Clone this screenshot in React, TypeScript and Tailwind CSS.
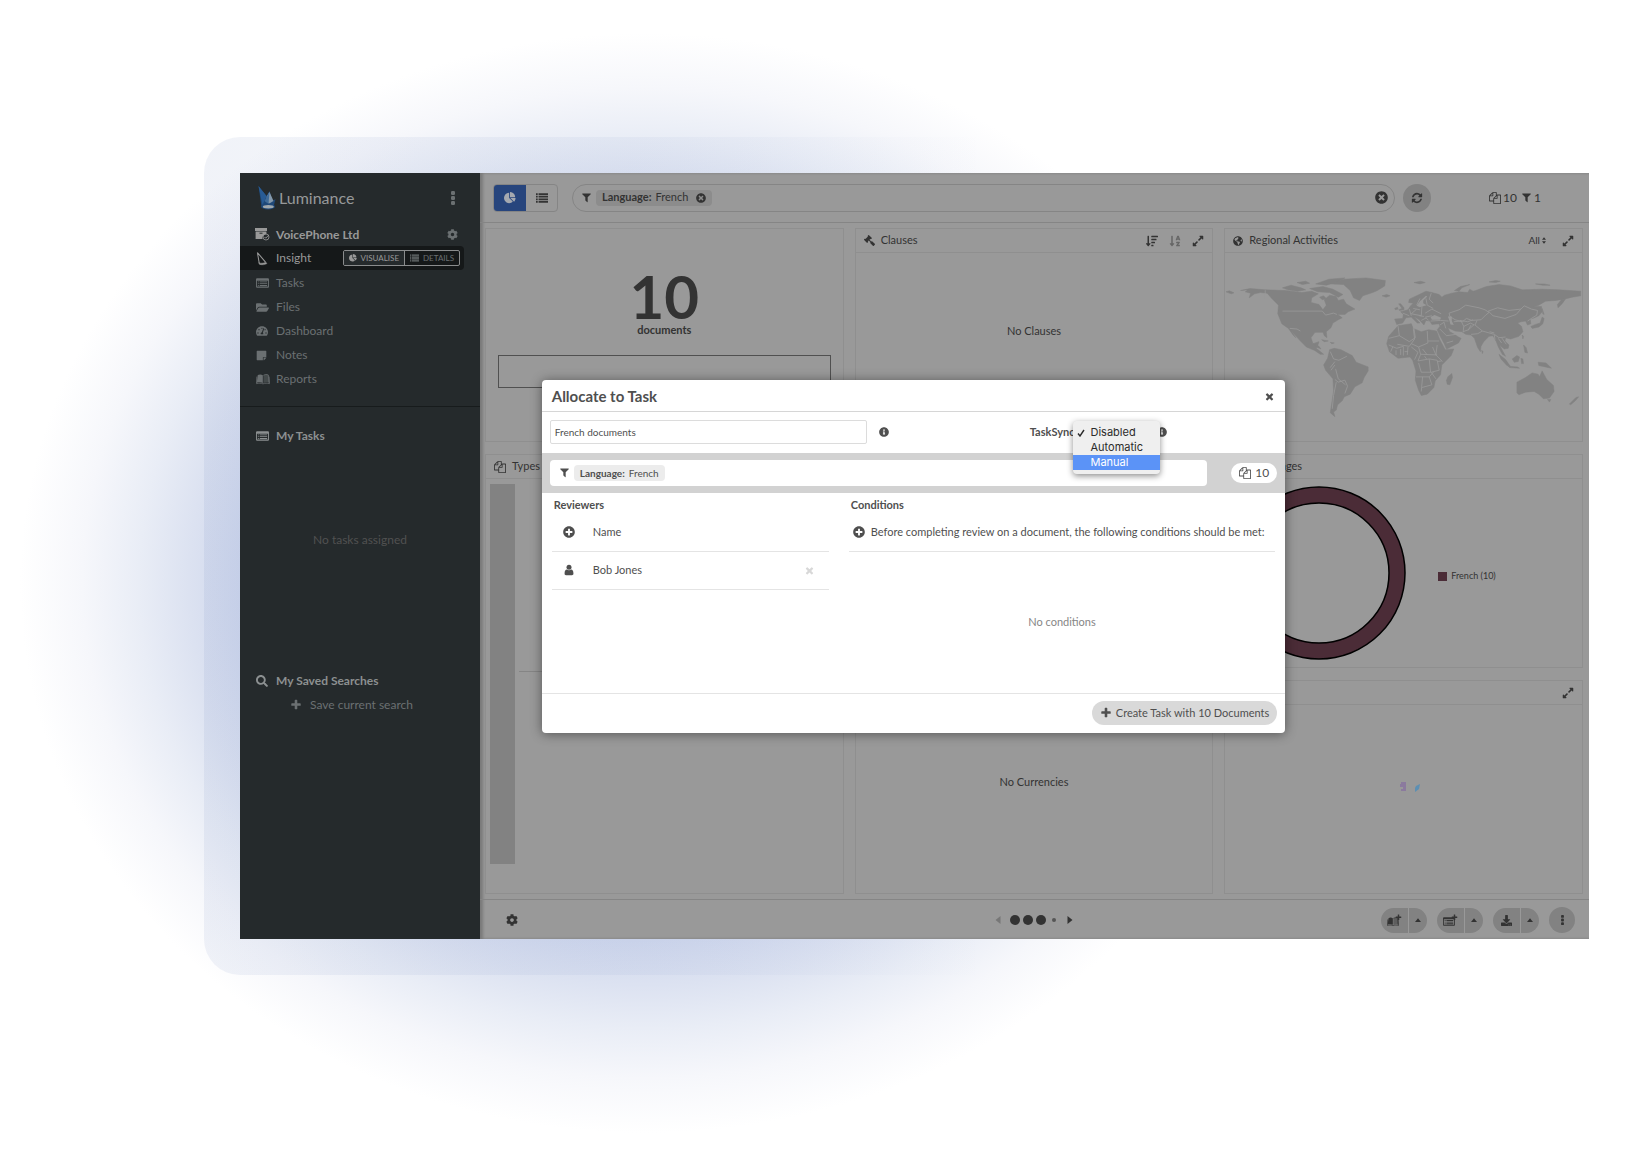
import React from "react";
import {
  FaCog,
  FaDownload,
  FaExpandAlt,
  FaFolderOpen,
  FaGavel,
  FaGlobeAmericas,
  FaInfoCircle,
  FaPlusCircle,
  FaSearch,
  FaSortAlphaDown,
  FaSortAmountDown,
  FaStickyNote,
  FaTachometerAlt,
  FaTimesCircle,
} from "react-icons/fa";

type IconProps = { className?: string };

const glyphs = {
  pie: "M768 890l546 546q-106 108-247.500 168t-298.500 60q-209 0-385.500-103t-279.500-279.500-103-385.500 103-385.500 279.500-279.500 385.500-103v762zm187 6h773q0 157-60 298.500t-168 247.500zm709-128h-768v-768q209 0 385.500 103t279.500 279.500 103 385.500z",
  times:
    "M1490 1322q0 40-28 68l-136 136q-28 28-68 28t-68-28l-294-294-294 294q-28 28-68 28t-68-28l-136-136q-28-28-28-68t28-68l294-294-294-294q-28-28-28-68t28-68l136-136q28-28 68-28t68 28l294 294 294-294q28-28 68-28t68 28l136 136q28 28 28 68t-28 68l-294 294 294 294q28 28 28 68z",
  plus: "M1600 736v192q0 40-28 68t-68 28h-416v416q0 40-28 68t-68 28h-192q-40 0-68-28t-28-68v-416h-416q-40 0-68-28t-28-68v-192q0-40 28-68t68-28h416v-416q0-40 28-68t68-28h192q40 0 68 28t28 68v416h416q40 0 68 28t28 68z",
  filter:
    "M1595 295q17 41-14 70l-493 493v742q0 42-39 59-13 5-25 5-27 0-45-19l-256-256q-19-19-19-45v-486l-493-493q-31-29-14-70 17-39 59-39h1280q42 0 59 39z",
  files:
    "M1696 384q40 0 68 28t28 68v1216q0 40-28 68t-68 28h-960q-40 0-68-28t-28-68v-288h-544q-40 0-68-28t-28-68v-672q0-40 20-88t48-76l408-408q28-28 76-48t88-20h416q40 0 68 28t28 68v328q68-40 128-40h416zm-544 213l-299 299h299v-299zm-640-384l-299 299h299v-299zm196 647l316-316v-416h-384v416q0 40-28 68t-68 28h-416v640h512v-256q0-40 20-88t48-76zm956 804v-1152h-384v416q0 40-28 68t-68 28h-416v640h896z",
  refresh:
    "M1639 1056q0 5-1 7-64 268-268 434.500t-478 166.500q-146 0-282.500-55t-243.500-157l-129 129q-19 19-45 19t-45-19-19-45v-448q0-26 19-45t45-19h448q26 0 45 19t19 45-19 45l-137 137q71 66 161 102t187 36q134 0 250-65t186-179q11-17 53-117 8-23 30-23h192q13 0 22.500 9.500t9.500 22.500zm25-800v448q0 26-19 45t-45 19h-448q-26 0-45-19t-19-45 19-45l138-138q-148-137-349-137-134 0-250 65t-186 179q-11 17-53 117-8 23-30 23h-199q-13 0-22.500-9.500t-9.500-22.500v-7q65-268 270-434.500t480-166.500q146 0 284 55.500t245 156.500l130-129q19-19 45-19t45 19 19 45z",
};

function Glyph({ name, className }: { name: keyof typeof glyphs; className?: string }) {
  return (
    <svg viewBox="0 0 1792 1792" fill="currentColor" className={className} aria-hidden="true">
      <path d={glyphs[name]} />
    </svg>
  );
}

function ListIcon({ className }: IconProps) {
  return (
    <svg viewBox="0 0 14 12" fill="currentColor" className={className} aria-hidden="true">
      <path d="M0 .5h2v2H0zM3 .5h11v2H3zM0 3.500h2v2H0zM3 3.500h11v2H3zM0 6.500h2v2H0zM3 6.500h11v2H3zM0 9.500h2v2H0zM3 9.500h11v2H3z" />
    </svg>
  );
}

function ListAlt({ className }: IconProps) {
  return (
    <svg viewBox="0 0 14 12" fill="currentColor" className={className} aria-hidden="true">
      <path
        fillRule="evenodd"
        d="M1.500 1h11A1.300 1.300 0 0 1 14 2.300v7.400A1.300 1.300 0 0 1 12.500 11h-11A1.300 1.300 0 0 1 0 9.700V2.300A1.300 1.300 0 0 1 1.500 1zM1 3.500v6.300h12V3.500zM2 4.300h1v1H2zm2 0h8v1H4zM2 6.200h1v1H2zm2 0h8v1H4zM2 8.100h1v1H2zm2 0h8v1H4z"
      />
    </svg>
  );
}

function Book({ className }: IconProps) {
  return (
    <svg viewBox="0 0 15 12" fill="currentColor" className={className} aria-hidden="true">
      <path d="M1.900 1.800C3.700.8 5.700.9 7.300 2v8.200c-1.800-.9-3.800-1-6.500-.3z" />
      <path fillOpacity=".45" d="M8 2c1.600-1 3.500-1.100 5.200-.3l.8 8.200c-2-.7-4.300-.6-6 .4z" />
      <path
        fill="none"
        stroke="currentColor"
        strokeWidth=".8"
        d="M8 2c1.600-1 3.500-1.100 5.200-.3l.6 8.200M.9 3.400L.5 11c2.500-.7 5-.6 7 .2 2-.8 4.500-.9 7-.2L14.100 3.400"
      />
    </svg>
  );
}

function Dots({ className }: IconProps) {
  return (
    <svg viewBox="0 0 4 14" fill="currentColor" className={className} aria-hidden="true">
      <rect width="4" height="4" rx="1.200" />
      <rect y="5" width="4" height="4" rx="1.200" />
      <rect y="10" width="4" height="4" rx="1.200" />
    </svg>
  );
}

function Person({ className }: IconProps) {
  return (
    <svg viewBox="0 0 10 12" fill="currentColor" className={className} aria-hidden="true">
      <circle cx="5" cy="3.300" r="2.500" />
      <path d="M.6 9C.6 6.700 1.600 5.500 2.800 5.500c1.200.9 3.200.9 4.400 0C8.400 5.500 9.400 6.700 9.400 9v1c0 .7-.7 1.200-1.400 1.200H2C1.200 11.200.6 10.700.6 10z" />
    </svg>
  );
}

function Archive({ className }: IconProps) {
  return (
    <svg viewBox="0 0 15 13" className={className} aria-hidden="true">
      <path fill="currentColor" d="M0 0h12v3H0zM.6 3.500h10.800V6A4 4 0 0 0 7.500 11H.6z" />
      <path stroke="#252a2c" d="M4.500 5.200h3" />
      <circle cx="11" cy="9" r="3" fill="none" stroke="currentColor" strokeWidth=".8" />
      <path fill="none" stroke="currentColor" strokeWidth=".9" d="M9.500 9l1.200 1.200L13.800 7" />
    </svg>
  );
}

function Sail({ className }: IconProps) {
  return (
    <svg viewBox="0 0 13 15" fill="none" stroke="currentColor" className={className} aria-hidden="true">
      <path d="M1.500 1L3.500 12.500M1.500 1l8.800 10.500" strokeWidth="1.100" />
      <path fill="currentColor" d="M3 12c2 1 5 .8 7.800-.5l1 1.500c-2 1.400-6 1.700-8.300.6z" strokeWidth=".5" />
    </svg>
  );
}

function Logo({ className }: IconProps) {
  return (
    <svg viewBox="0 0 19 24" className={className} aria-hidden="true">
      <path fill="#1f4878" d="M1 0l8 10 3-5 3 10 3-2-2 8H4z" />
      <path fill="#285b94" d="M1 0l8 10-4 9z" />
      <path fill="#8398ab" d="M12 6l4 9-5 3-2-7z" />
      <path fill="#3f6b98" d="M12 6l-5 9 4 3z" />
      <ellipse cx="10.500" cy="20.500" rx="7" ry="3" fill="#1f4878" />
      <ellipse cx="10.800" cy="20.800" rx="5.500" ry="1.700" fill="#a0a8ad" />
    </svg>
  );
}

function Caret({ className }: IconProps) {
  return (
    <svg viewBox="0 0 8 5" fill="currentColor" className={className} aria-hidden="true">
      <path d="M4 0l4 5H0z" />
    </svg>
  );
}

const land = [
  // North America
  "M92 376l28-6 46 4 60 2 50 6 30-4 20 8-20 12 -2 14 24 6 12 16 10-14-6-16 16-14 20 4 6 12 16-4 8 14 26 16-20 8-10 8-22 0 14 10-12 6-16 10-6 14-14 12 2 18-8-6-4-10-24 0-12 16 6 18 18-6-4 12-4 8 10 8 12 10-10 0-18-12-24-10-20-20-16-18-10-12 14 22-8-8-14-20-20-14-12-30 2-26-20-20-14-16-20-2-18 4-16 12 4-14-16-4 8-6z",
  "M48 380l10-3 14 6-8 3z",
  // Arctic islands
  "M218 368l26-8 30 8 14 6-24 4-30-4zM262 352l26-4 12 6-22 4zM318 356l40-14 48-4-22 12-34 10zM300 370l40-6 30 8 30 16-14 8-26-14-36-2zM330 396l12-4 8 8-12 4z",
  // Greenland
  "M366 356l36-14 68-4 58 8-2 16-22 14-14 6-30 10-10 14-18-8-10-22-20-18z",
  "M518 392l14-4 10 4-12 4z",
  // South America
  "M360 554l14-4 20 4 34 18 12 20 36 14 0 12-12 20-6 16-22 12-14 22-18 8-6 12-14 12-4 16-8 6 4 14-14-12 4-26 6-40-2-36-22-26-6-16 12-20z",
  "M310 536l18 8 6 8-14-6zM336 524l20 4-12 2zM362 532l12 2-8 2z",
  // Africa
  "M566 482l40-6 6 14 24 10 22-6 24 4 10 26 16 30 26-2-8 20-28 28-4 30-16 18-4 20-20 20-18 4-8-16-10-30 2-28-10-32-8-10-36 4-26-20-8-24 6-22 14-16z",
  "M716 636l12-10 2 12-8 22-8-2-2-12z",
  // Europe and Asia
  "M556 462L580 460 582 448 574 440 596 434 604 422 612 414 598 412 600 402 630 388 650 378 668 382 690 388 698 396 706 390 728 384 750 380 776 382 782 372 792 378 800 376 832 364 870 358 905 362 940 374 1000 372 1050 374 1116 378 1116 392 1090 396 1066 402 1040 406 1010 408 990 420 975 424 998 424 1000 440 990 452 972 460 964 462 966 476 956 480 950 468 936 470 926 474 938 484 942 500 930 514 905 522 890 518 888 528 900 540 898 550 886 552 876 544 870 536 880 556 890 574 880 568 868 546 862 530 852 512 840 514 824 530 816 544 814 560 806 548 796 520 786 510 770 508 758 500 738 498 716 488 722 500 736 508 748 516 756 520 748 534 712 552 704 534 690 508 684 494 692 484 690 476 668 478 662 468 650 466 644 480 630 464 614 454 632 474 624 474 606 456 590 458 580 474 562 478z",
  "M568 434l10-4-10-14 6 0 10 12 0 6-14 2zM556 430l8-4 2 6-8 2zM614 352l20-4 14 4-16 4zM736 376l18-12 28-6-24 10-8 10zM840 350l20-4 14 2-14 4zM980 356l26 0 18 4-22 0z",
  "M1046 418l12-14 12-2-10 14-12 12z",
  // Japan and south-east Asia
  "M966 484l14-6 14-4 6-18 6 4-4 16-12 10-20 4zM1000 430l6 18-4-2zM940 510l4 4-2 8zM944 540l8 8 4 16-8-2zM870 568l20 16 14 20-10-2-18-20zM898 604l28 2 6 4-30-2zM910 582l14-10 8 4-4 14-12 2zM936 580l6 2 2 14-6 0zM988 592l24 2 16 16-18-4-20-4zM818 556l4 4-2 6z",
  // Oceania
  "M924 652l26-14 20-14 18 4 4 8 8-18 14 26 20 18 2 18-14 20-18 2-14-14-14-8-26 2-20 8-6-6zM1016 704l10 0-4 8zM1082 718l20-20 8-2-10 12-14 12z",
];

// Inland seas cut out of the land
const seas = [
  "M650 392l-18 16-10 14 10 4 20-6-10-6 0-8 12-12z",
  "M664 456l12-6 20 8-4 6-24 0z",
  "M716 454l12 0 0 14 6 12-10-2-4-14z",
];

const borders =
  "M166 375v26M218 438h120l10 12 24-6 10 4M240 490l22 2 10 6M376 600l-12 16M362 560l10 22 16 4 24-12M376 590l-14 18M378 612l8 30 22 18M376 644l10 8 20-6 8 18-8 22M380 652l-8 40-4 40M566 482l4 30-32 8M570 512l30 18 18-12-6-42M612 490l4 32-16 22-36-6M654 498l2 36-28 12-22-10M656 528h34M538 540l24 10 20-6v28M596 546l-2 24M606 546l20 16-10 22M628 546l6 22 50 2M684 540l-4 30 20 20M634 568l-8 20 34-6 24 4 6 30-24 6-30 0-8-28M620 636h40l14-16M640 636l-4 44M660 636l8 24-30 8M666 622l14 20M560 556v14M574 552v18M660 582l4 40M640 552l14 18M670 546l10 24M646 574l6 8M684 590l14-2M550 546l-6 14M586 560l10 0M580 444l20 8M600 432l6 20M650 400l4 20 18 10M622 432l-16 14 30 6M648 444l20-12 28 14M636 466l16-8M666 384l-6 18 12 12M632 400l-10 20M638 424l-2 28M612 430l20 4M630 452l14 2M668 452l-20 4M650 458l8 8M720 444l30-10 20-14 40 8 18 6 12 8-10 8-14 14-28 2-16-6-12 10-22-6-16-10zM838 438l28-10 34 8 36-4-14 16-34 12-36-8zM936 432l10-10 22 10 18 4-2 14-16 10-12 8M804 466l-6 14 22 18 36 10 14 10 20-2M820 498l-14 8-20 2M776 496l20-18M704 470l6 20M734 470l22-2 8 16-2 18M764 484l20-10 12 6M762 500l16-6 8-14M856 510l2 14M868 520l10 14M878 518l14 20M664 468l30-2 24 2M692 480l12-8M692 492l20 20 28-4M712 534l20-6M752 466l24 4 16-6M842 500l14 4";

function WorldMap() {
  return (
    <svg viewBox="45 263 1074 565" className="block w-full" role="img" aria-label="World map">
      <g fill="#828282" stroke="#828282" strokeWidth="1.500" strokeLinejoin="round">
        {land.map((d) => (
          <path key={d} d={d} />
        ))}
      </g>
      <g fill="#999999">
        {seas.map((d) => (
          <path key={d} d={d} />
        ))}
      </g>
      <path d={borders} fill="none" stroke="#999999" strokeWidth="2.500" strokeLinejoin="round" />
    </svg>
  );
}

function Card({
  icon,
  title,
  tools,
  className = "",
  children,
}: {
  icon?: React.ReactNode;
  title?: string;
  tools?: React.ReactNode;
  className?: string;
  children?: React.ReactNode;
}) {
  return (
    <section className={"flex min-h-0 min-w-0 flex-col border border-[#8f8f8f] " + className}>
      <header className="flex h-6 shrink-0 items-center border-b border-[#8f8f8f] px-2">
        {icon}
        {title && <h2 className="ml-1.5 text-[11px]">{title}</h2>}
        <div className="ml-auto flex items-center">{tools}</div>
      </header>
      {children}
    </section>
  );
}

function Expand() {
  return (
    <button aria-label="Expand">
      <FaExpandAlt className="size-3" />
    </button>
  );
}

function NavItem({ icon, label }: { icon: React.ReactNode; label: string }) {
  return (
    <li>
      <a href="#" className="flex h-6 items-center pl-4">
        <span className="flex w-5 items-center">{icon}</span>
        {label}
      </a>
    </li>
  );
}

function Sidebar() {
  return (
    <aside className="flex w-60 shrink-0 flex-col bg-[#252a2c] text-xs leading-6 text-[#6b7072]">
      <div className="flex h-[50px] items-center pr-[25px] pl-[17px]">
        <Logo className="h-6 w-5" />
        <span className="ml-0.5 text-base text-[#97999a]">Luminance</span>
        <button aria-label="Menu" className="ml-auto">
          <Dots className="h-3.5 w-1" />
        </button>
      </div>
      <div className="flex h-[23px] items-center pr-[22px] pl-[15px] font-bold text-[#999999]">
        <Archive className="mr-1.5 h-[13px] w-[15px]" />
        VoicePhone Ltd
        <button aria-label="Settings" className="ml-auto text-[#6b7072]">
          <FaCog className="size-[11px]" />
        </button>
      </div>
      <div className="mr-4 flex h-6 items-center rounded-r bg-[#151819] pr-1 pl-4 text-[#999999]">
        <Sail className="mr-2 h-[15px] w-3" />
        Insight
        <div className="ml-auto flex h-4 overflow-hidden rounded-xs border border-[#8a8c8d] text-[8px] leading-[14px]">
          <button className="flex items-center gap-1 border-r border-[#8a8c8d] bg-[#252a2c] px-[5px]">
            <Glyph name="pie" className="size-2" />
            VISUALISE
          </button>
          <button className="flex items-center gap-1 px-[5px] text-[#6b7072]">
            <ListIcon className="h-2 w-[9px]" />
            DETAILS
          </button>
        </div>
      </div>
      <ul className="mt-px">
        <NavItem icon={<ListAlt className="h-3 w-[13px]" />} label="Tasks" />
        <NavItem icon={<FaFolderOpen className="size-[13px]" />} label="Files" />
        <NavItem icon={<FaTachometerAlt className="size-3" />} label="Dashboard" />
        <NavItem icon={<FaStickyNote className="size-[11px]" />} label="Notes" />
        <NavItem icon={<Book className="h-3 w-3.5" />} label="Reports" />
      </ul>
      <div className="mt-[15px] border-t border-[#171b1c] pt-[17px]">
        <h2 className="flex items-center pl-4 font-bold text-[#8c9091]">
          <ListAlt className="mr-[7px] h-3 w-[13px]" />
          My Tasks
        </h2>
        <p className="py-20 text-center text-[#515151]">No tasks assigned</p>
      </div>
      <div className="mt-[37px]">
        <h2 className="flex items-center pl-4 font-bold text-[#8c9091]">
          <FaSearch className="mr-2 size-3" />
          My Saved Searches
        </h2>
        <button className="flex items-center pl-[50px]">
          <Glyph name="plus" className="mr-2 size-3" />
          Save current search
        </button>
      </div>
    </aside>
  );
}

function Toolbar() {
  return (
    <div className="flex h-[50px] shrink-0 items-center border-b border-[#858585] pr-12 pl-[13px]">
      <div className="flex h-7 w-[65px] overflow-hidden rounded border border-[#858585]">
        <button aria-label="Visualise" className="flex w-8 items-center justify-center bg-[#27457d] text-[#a5a9b0]">
          <Glyph name="pie" className="size-3" />
        </button>
        <button aria-label="Details" className="flex flex-1 items-center justify-center">
          <ListIcon className="h-3 w-3" />
        </button>
      </div>
      <div className="ml-3.5 flex h-7 flex-1 items-center rounded-full border border-[#858585] pr-1.5 pl-2">
        <Glyph name="filter" className="size-[11px]" />
        <span className="ml-1 flex h-4 items-center rounded-sm bg-[#8c8c8c] px-1.5 text-[11px]">
          <b className="mr-1">Language:</b>French
          <button aria-label="Remove filter" className="ml-2">
            <FaTimesCircle className="size-2.5" />
          </button>
        </span>
        <button aria-label="Clear" className="ml-auto">
          <FaTimesCircle className="size-[13px]" />
        </button>
      </div>
      <button aria-label="Refresh" className="ml-2 flex size-7 items-center justify-center rounded-full bg-[#828282]">
        <Glyph name="refresh" className="size-3" />
      </button>
      <div className="ml-[58px] flex items-center text-xs">
        <Glyph name="files" className="mr-0.5 size-3" />
        10
        <Glyph name="filter" className="mx-0.5 ml-1 size-[11px]" />1
      </div>
    </div>
  );
}

function SplitButton({ label, children }: { label: string; children: React.ReactNode }) {
  return (
    <div className="flex h-[25px] gap-px overflow-hidden rounded-full">
      <button aria-label={label} className="flex w-[27px] items-center justify-center bg-[#828282]">
        {children}
      </button>
      <button aria-label={label + " options"} className="flex w-[18px] items-center justify-center bg-[#828282]">
        <Caret className="h-1 w-1.5" />
      </button>
    </div>
  );
}

function BottomBar() {
  return (
    <div className="grid h-10 shrink-0 grid-cols-3 items-center border-t border-[#858585] px-3.5 pt-px">
      <button aria-label="Settings" className="ml-3 justify-self-start">
        <FaCog className="size-3" />
      </button>
      <div className="flex items-center justify-center gap-0.5">
        <Caret className="mr-1.5 h-1.5 w-2 -rotate-90 text-[#777777]" />
        <span className="size-2.5 rounded-full bg-current" />
        <span className="ml-px size-2.5 rounded-full bg-current" />
        <span className="ml-px size-2.5 rounded-full bg-current" />
        <span className="ml-1 size-1 rounded-full bg-[#555555]" />
        <Caret className="ml-2 h-1.5 w-2 rotate-90" />
      </div>
      <div className="flex items-center gap-2.5 justify-self-end">
        <SplitButton label="Add report">
          <span className="flex items-end">
            <Book className="h-[11px] w-3" />
            <Glyph name="plus" className="mb-1.5 -ml-1 size-[7px]" />
          </span>
        </SplitButton>
        <SplitButton label="Add task">
          <span className="flex items-end">
            <ListAlt className="h-[11px] w-3" />
            <Glyph name="plus" className="mb-1.5 -ml-1 size-[7px]" />
          </span>
        </SplitButton>
        <SplitButton label="Download">
          <FaDownload className="size-[11px]" />
        </SplitButton>
        <button aria-label="More" className="flex size-[26px] items-center justify-center rounded-full bg-[#828282]">
          <Dots className="h-2.5 w-[3px]" />
        </button>
      </div>
    </div>
  );
}

function Cards() {
  return (
    <div className="grid min-h-0 flex-1 grid-cols-3 gap-x-[11px] py-[5px] pr-1.5 pl-[5px]">
      <div className="grid min-h-0 grid-rows-3 gap-3">
        <section className="flex flex-col items-center border border-[#8f8f8f] px-3 pt-[41px]">
          <p className="text-[60px] leading-[52px] font-bold">10</p>
          <p className="text-[11px] leading-4 font-bold">documents</p>
          <div className="mt-[17px] h-[33px] w-full border border-[#505050]" />
        </section>
        <Card icon={<Glyph name="files" className="size-3" />} title="Types" className="row-span-2">
          <div className="flex flex-1 items-start pt-[5px] pr-3 pl-1">
            <div className="h-[380px] w-[25px] bg-[#828282]" />
            <div className="mt-[187px] ml-1 flex-1 border-t border-[#858585]" />
          </div>
        </Card>
      </div>
      <div className="grid min-h-0 grid-rows-3 gap-3">
        <Card
          icon={<FaGavel className="size-[11px] -scale-x-100" />}
          title="Clauses"
          tools={
            <>
              <button aria-label="Sort by amount" className="mr-[11px]">
                <FaSortAmountDown className="size-3" />
              </button>
              <button aria-label="Sort by name" className="mr-[11px] text-[#666666]">
                <FaSortAlphaDown className="size-3" />
              </button>
              <Expand />
            </>
          }
        >
          <p className="mt-[70px] text-center text-[11px] leading-4">No Clauses</p>
        </Card>
        <Card />
        <Card>
          <p className="mt-[69px] text-center text-[11px] leading-4">No Currencies</p>
        </Card>
      </div>
      <div className="grid min-h-0 grid-rows-3 gap-3">
        <Card
          icon={<FaGlobeAmericas className="size-2.5" />}
          title="Regional Activities"
          tools={
            <>
              <button className="mr-4 flex items-center gap-0.5 text-[10px]">
                All
                <span className="flex flex-col gap-px">
                  <Caret className="h-[3px] w-1" />
                  <Caret className="h-[3px] w-1 rotate-180" />
                </span>
              </button>
              <Expand />
            </>
          }
        >
          <WorldMap />
        </Card>
        <Card icon={<Glyph name="pie" className="size-3" />} title="Languages">
          <div className="flex flex-1 items-center pl-1.5">
            <svg viewBox="0 0 176 176" className="size-44" role="img" aria-label="French, 10 documents">
              <circle cx="88" cy="88" r="78" fill="none" stroke="#4b2c37" strokeWidth="16" />
              <circle cx="88" cy="88" r="86" fill="none" stroke="#000000" strokeWidth="1.500" />
              <circle cx="88" cy="88" r="70" fill="none" stroke="#000000" strokeWidth="1.500" />
            </svg>
            <span className="mt-1.5 ml-[31px] flex items-center gap-1 text-[9px]">
              <span className="size-[9px] bg-[#4b2c37]" />
              French (10)
            </span>
          </div>
        </Card>
        <Card tools={<Expand />}>
          <div className="flex flex-1 items-start justify-center pt-[76px] pl-3">
            <svg viewBox="0 0 20 11" className="h-[11px] w-5" aria-hidden="true">
              <path fill="#8b7a9e" d="M1 1h5v9H1V8h2V6H0V3h1z" />
              <path fill="#5c8fb3" d="M16 5l4-2-1 5-4 3v-4z" />
            </svg>
          </div>
        </Card>
      </div>
    </div>
  );
}

function TaskDialog() {
  return (
    <div
      role="dialog"
      aria-label="Allocate to Task"
      className="flex min-h-[353px] w-[55.2%] flex-col rounded-sm bg-white text-[11px] leading-4 text-[#4f4f4f] shadow-[0_1px_12px_rgba(0,0,0,0.45)]"
    >
      <header className="flex h-8 items-center border-b border-[#d6d6d6] pt-0.5 pr-2.5 pl-2.5">
        <h1 className="text-[15px] leading-5 font-bold">Allocate to Task</h1>
        <button aria-label="Close" className="ml-auto">
          <Glyph name="times" className="size-[11px]" />
        </button>
      </header>
      <div className="flex h-[41px] items-center px-2">
        <input
          aria-label="Task name"
          defaultValue="French documents"
          className="h-6 w-[317px] rounded-xs border border-[#dcdcdc] px-1 text-[10px]"
        />
        <FaInfoCircle className="ml-3 size-2.5" />
        <span id="sync" className="ml-[141px] font-bold">
          TaskSync
        </span>
        <div className="relative h-6 w-[77px]">
          <ul
            role="listbox"
            aria-labelledby="sync"
            className="absolute top-px -left-px z-10 w-[87px] rounded-sm bg-[#efefef] py-1 font-[Inter,sans-serif] text-[11px] leading-[15px] text-[#2b2b2b] shadow-[0_2px_6px_rgba(0,0,0,0.45)]"
          >
            <li role="option" aria-selected="true" className="relative pl-[17px]">
              <svg viewBox="0 0 8 8" className="absolute top-1 left-1 size-2" aria-hidden="true">
                <path d="M1 4.500L3 7l4-6" fill="none" stroke="currentColor" strokeWidth="1.400" />
              </svg>
              Disabled
            </li>
            <li role="option" aria-selected="false" className="pl-[17px]">
              Automatic
            </li>
            <li role="option" aria-selected="false" className="bg-[#5b93f7] pl-[17px] text-white">
              Manual
            </li>
          </ul>
        </div>
        <FaInfoCircle className="ml-1.5 size-2.5" />
      </div>
      <div className="flex h-10 items-center bg-[#d2d2d2] px-2">
        <div className="flex h-[26px] flex-1 items-center rounded bg-white px-[9px]">
          <Glyph name="filter" className="size-[11px]" />
          <span className="ml-1 flex h-4 items-center rounded-sm bg-[#ececec] px-1.5 text-[10px]">
            <b className="mr-1">Language:</b>French
          </span>
        </div>
        <span className="ml-6 flex h-5 items-center gap-1 rounded-full bg-white px-2 text-xs">
          <Glyph name="files" className="size-3" />
          10
        </span>
      </div>
      <div className="flex flex-1">
        <div className="ml-2.5 w-[277px] shrink-0">
          <h2 className="mt-[3px] ml-0.5 leading-[18px] font-bold">Reviewers</h2>
          <div className="flex h-[38px] items-center border-b border-[#e4e4e4] pl-[11px]">
            <button aria-label="Add reviewer">
              <FaPlusCircle className="size-3" />
            </button>
            <span className="ml-[18px]">Name</span>
          </div>
          <div className="flex h-[38px] items-center border-b border-[#e4e4e4] pr-3.5 pl-[11px]">
            <Person className="size-3" />
            <span className="ml-[18px]">Bob Jones</span>
            <button aria-label="Remove Bob Jones" className="ml-auto text-[#d8d8d8]">
              <Glyph name="times" className="size-[11px]" />
            </button>
          </div>
        </div>
        <div className="mr-2.5 ml-5 flex flex-1 flex-col">
          <h2 className="mt-[3px] ml-0.5 leading-[18px] font-bold">Conditions</h2>
          <div className="flex h-[38px] items-center border-b border-[#e4e4e4] pl-1 whitespace-nowrap">
            <button aria-label="Add condition">
              <FaPlusCircle className="size-3" />
            </button>
            <span className="ml-1.5">
              Before completing review on a document, the following conditions should be met:
            </span>
          </div>
          <p className="mt-[62px] text-center text-[#868686]">No conditions</p>
        </div>
      </div>
      <footer className="flex h-10 items-center justify-end border-t border-[#e4e4e4] px-2">
        <button className="flex h-6 items-center gap-1 rounded-full bg-[#d9d9d9] px-2">
          <Glyph name="plus" className="size-3" />
          Create Task with 10 Documents
        </button>
      </footer>
    </div>
  );
}

export default function App() {
  return (
    <div className="flex min-h-screen flex-col bg-white bg-[radial-gradient(625px_550px_at_645px_583px,#8298d2_0%,#c5cfe9_58%,#d0d8ed_65%,#dce2f1_73%,#e9edf6_81%,#f6f7fb_90%,#ffffff_100%)] pt-[137px] pb-[191px] pl-[204px] font-[Lato,sans-serif] text-[#333333]">
      <div className="flex flex-1 rounded-l-[36px] bg-[linear-gradient(90deg,rgba(70,100,170,0.08),rgba(70,100,170,0.05)_30%,rgba(255,255,255,0)_55%)] py-9 pr-11 pl-9">
        <div className="relative flex min-w-0 flex-1 bg-[#999999]">
          <Sidebar />
          <main className="flex min-w-0 flex-1 flex-col shadow-[inset_3px_0_3px_rgba(0,0,0,0.2)]">
            <Toolbar />
            <Cards />
            <BottomBar />
          </main>
          <div className="absolute inset-0 flex items-center justify-center pr-0.5">
            <TaskDialog />
          </div>
        </div>
      </div>
    </div>
  );
}
